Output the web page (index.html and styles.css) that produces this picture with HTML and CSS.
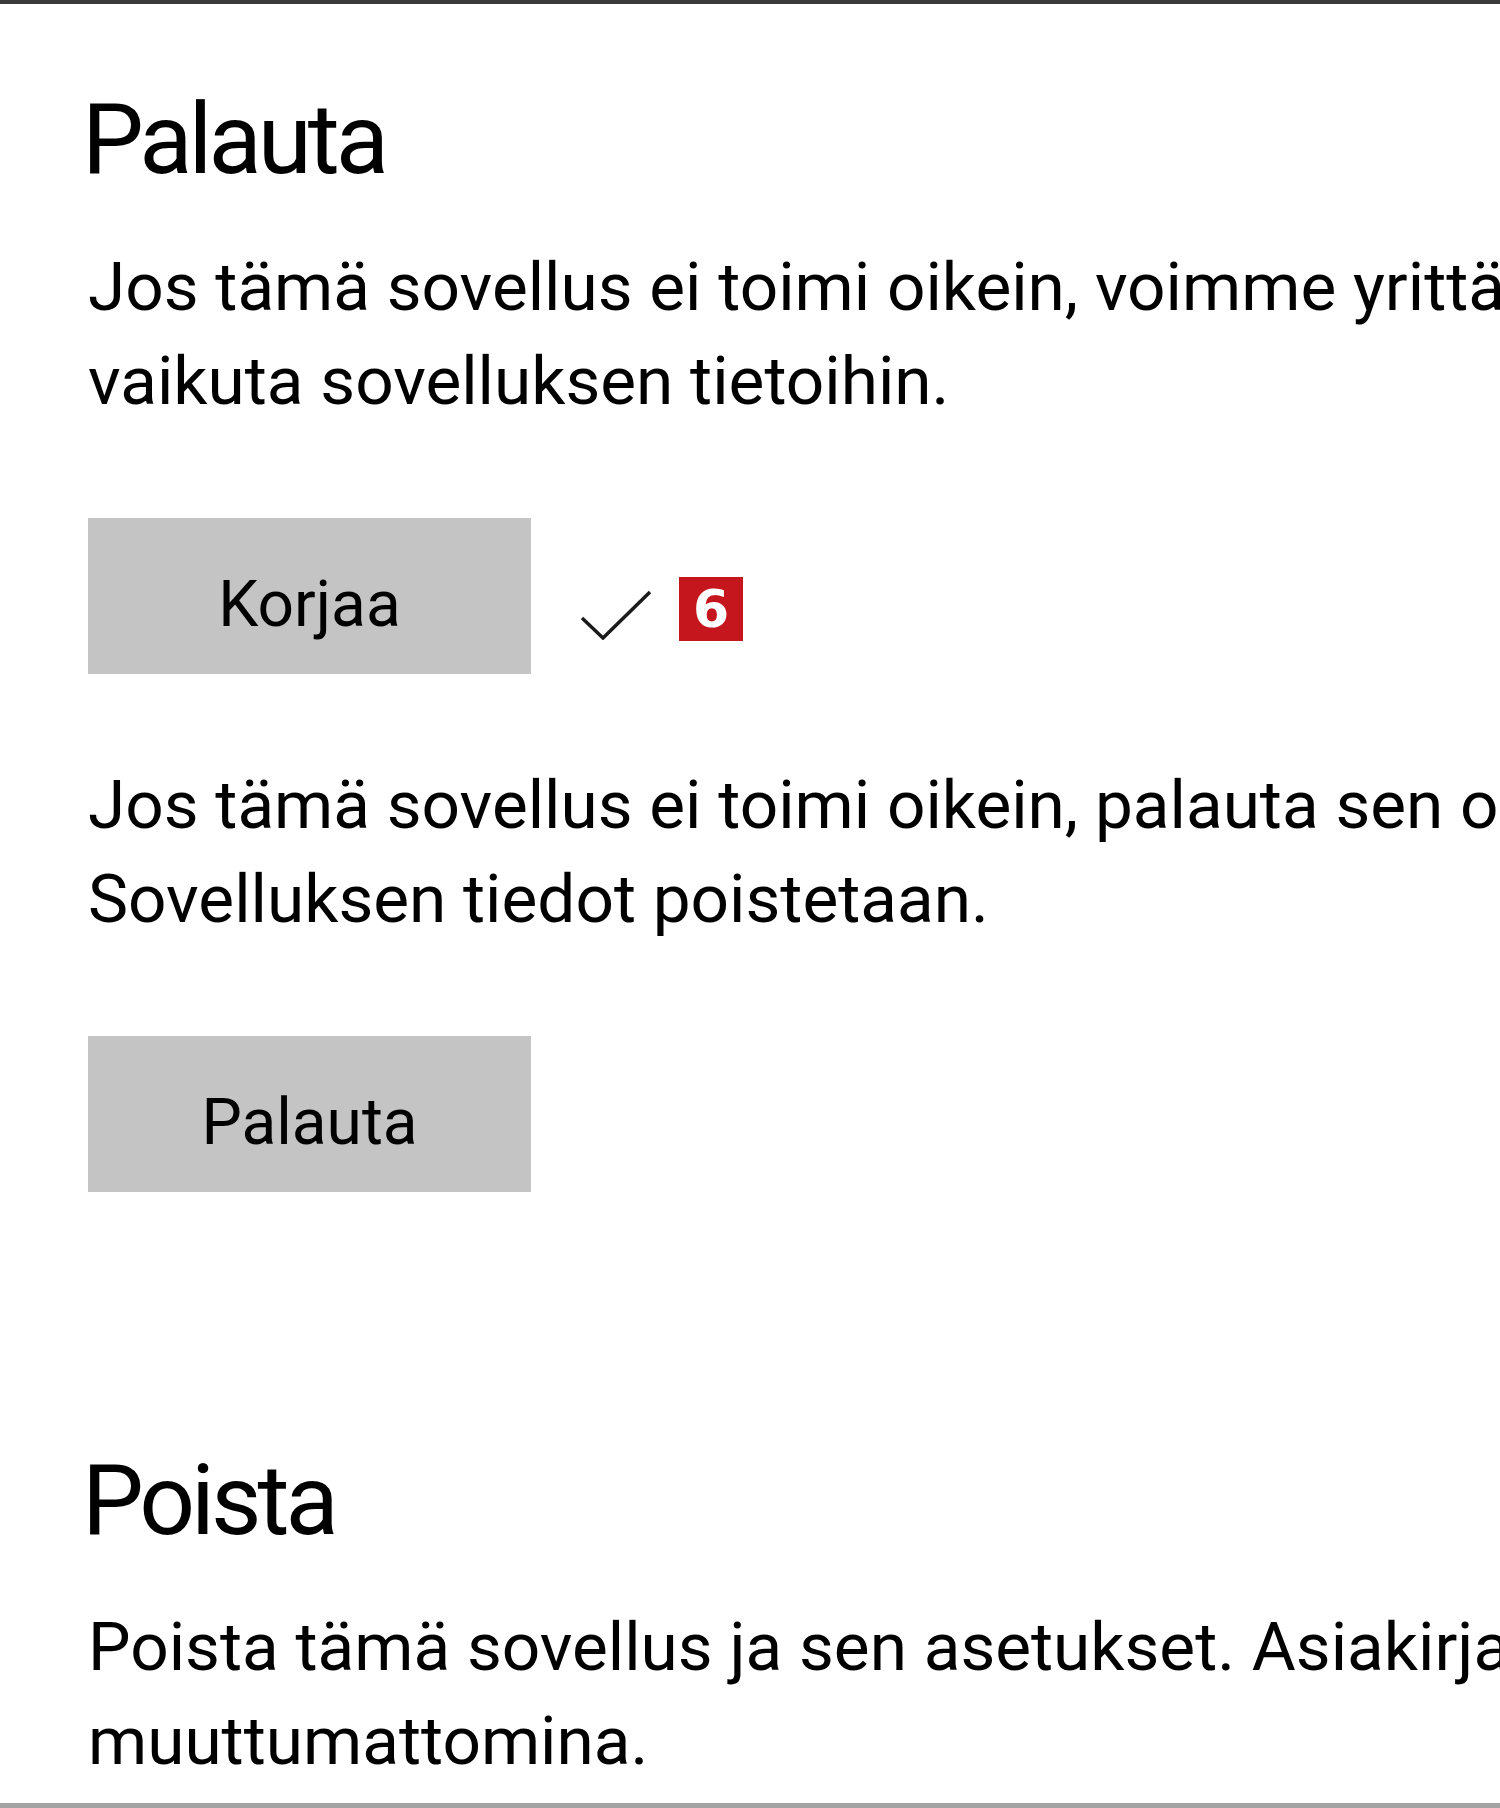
FILE: index.html
```
<!DOCTYPE html>
<html lang="fi">
<head>
  <meta charset="UTF-8">
  <meta name="viewport" content="width=device-width, initial-scale=1.0">
  <title>Sovelluksen asetukset</title>
  <link rel="stylesheet" href="styles.css">
</head>
<body>
  <div class="window">
    <h2>Palauta</h2>
    <p class="text">Jos tämä sovellus ei toimi oikein, voimme yrittää korjata sen. Tämä ei<br>vaikuta sovelluksen tietoihin.</p>

    <div class="row">
      <button class="btn">Korjaa</button>
      <svg class="check" width="72" height="52" viewBox="0 0 72 52">
        <polyline points="2,30 23,50 70,4" fill="none" stroke="#1a1a1a" stroke-width="3.5"/>
      </svg>
      <span class="badge">6</span>
    </div>

    <p class="text text-reset">Jos tämä sovellus ei toimi oikein, palauta sen oletusasetukset.<br>Sovelluksen tiedot poistetaan.</p>

    <div class="row">
      <button class="btn">Palauta</button>
    </div>

    <h2 class="title-remove">Poista</h2>
    <p class="text text-remove">Poista tämä sovellus ja sen asetukset. Asiakirjat säilyvät<br>muuttumattomina.</p>
  </div>
</body>
</html>
```
FILE: styles.css
```
html,
body {
  overflow: hidden;
}

body,
h2,
p {
  margin: 0;
  padding: 0;
}

body {
  background: #fff;
  color: #000;
  font-family: Roboto, "Open Sans", sans-serif;
}

.window {
  box-sizing: border-box;
  height: 1808px;
  padding-left: 88px;
  border-top: 4px solid #3a3a3a;
  border-bottom: 5px solid #a3a3a3;
  overflow: hidden;
  white-space: nowrap;
}

h2 {
  margin-top: 77px;
  margin-left: -6px;
  font-size: 98px;
  font-weight: 400;
  line-height: 118px;
  letter-spacing: -4px;
}

.text {
  margin-top: 41px;
  font-size: 67.5px;
  line-height: 94px;
}

.row {
  display: flex;
  align-items: flex-start;
  margin-top: 90px;
}

.btn {
  display: flex;
  align-items: center;
  justify-content: center;
  box-sizing: border-box;
  width: 443px;
  height: 156px;
  padding: 16px 0 0;
  border: 0;
  background: #c4c4c4;
  color: #000;
  font-family: Roboto, "Open Sans", sans-serif;
  font-size: 64px;
}

.check {
  margin: 70px 0 0 49px;
}

.badge {
  box-sizing: border-box;
  width: 64px;
  height: 64px;
  margin: 59px 0 0 27px;
  background: #c4161c;
  color: #fff;
  font: bold 52px/64px "DejaVu Sans", sans-serif;
  text-align: center;
}

.text-reset {
  margin-top: 84px;
}

.title-remove {
  margin-top: 250px;
}

.text-remove {
  margin-top: 40px;
}
```
